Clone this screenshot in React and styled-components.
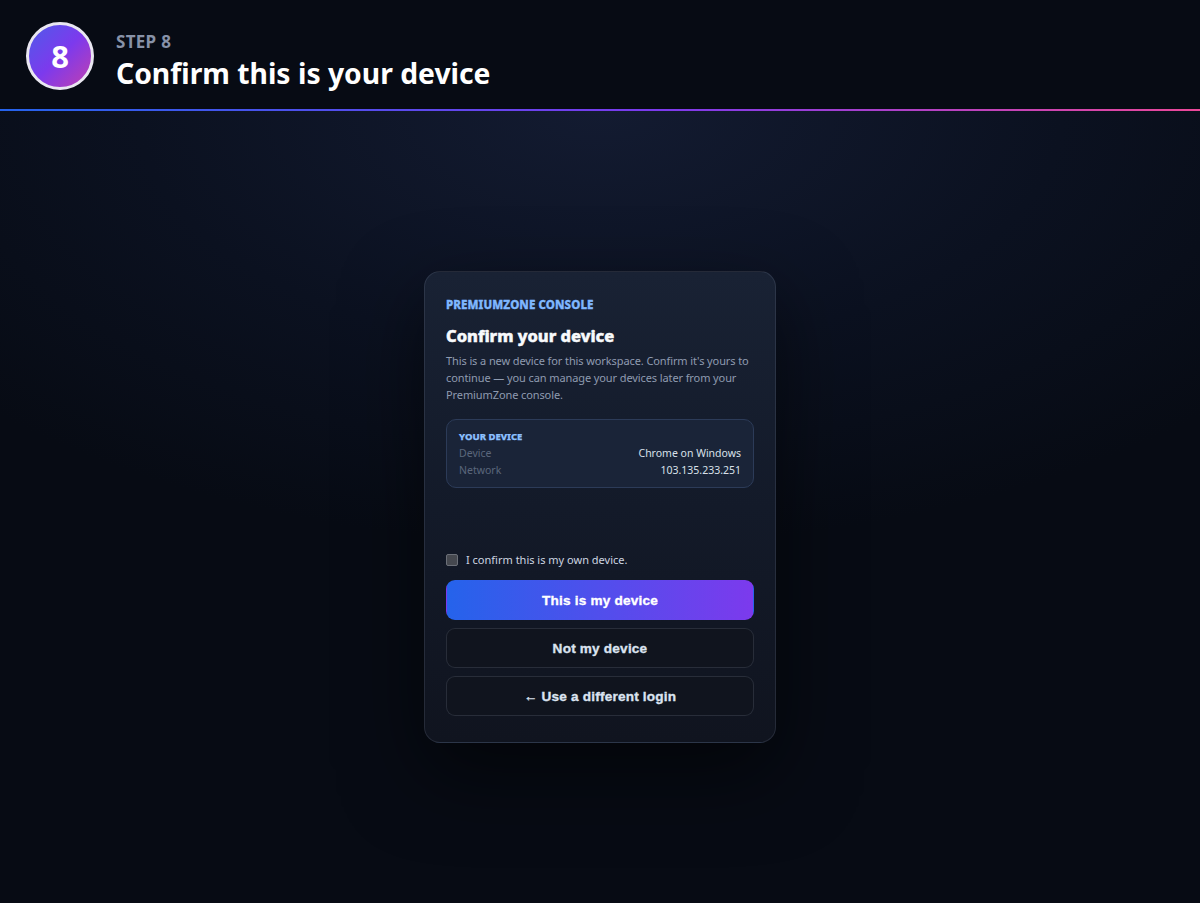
import React from 'react';
import styled, { createGlobalStyle } from 'styled-components';

const GlobalStyle = createGlobalStyle`
    html, body {
        margin: 0;
        padding: 0;
        background: #070b14;
    }
    body {
        font-family: "Noto Sans", "Open Sans", sans-serif;
    }
    * { box-sizing: border-box; }
`;

const PageStyled = styled.div`
    display: flex;
    flex-direction: column;
    min-height: 903px;
    background: #070b14;
`;

const HeaderStyled = styled.header`
    display: flex;
    align-items: center;
    gap: 22px;
    height: 111px;
    padding: 3px 26px 0;
    background: #070b14;
    border-bottom: 2px solid transparent;
    border-image: linear-gradient(90deg, #2563eb, #7c3aed 55%, #ec4899) 1;
`;

const Badge = styled.div`
    display: flex;
    align-items: center;
    justify-content: center;
    width: 68px;
    height: 68px;
    border-radius: 50%;
    border: 3px solid #e9e7f1;
    background: linear-gradient(135deg, #4f5be9 0%, #7c3aed 50%, #c13fb0 100%);
    color: #fff;
    font-size: 31px;
    font-weight: 700;
`;

const HeaderText = styled.div`
    display: flex;
    flex-direction: column;
    margin-top: 13px;

    .header{
        &__step {
            font-size: 17px;
            font-weight: 700;
            color: #8792a8;
            letter-spacing: 0.3px;
            line-height: 22px;
        }
        &__title {
            margin: 0;
            font-size: 28.3px;
            font-weight: 700;
            color: #fff;
            line-height: 41px;
        }
    }
`;

const MainStyled = styled.main`
    flex: 1;
    display: flex;
    align-items: center;
    justify-content: center;
    background: radial-gradient(ellipse 70% 55% at 50% 0%, #131b31 0%, #0b1120 55%, #070b14 100%);
`;

const CardStyled = styled.div`
    display: flex;
    flex-direction: column;
    width: 352px;
    padding: 25px 21px 26px;
    border-radius: 16px;
    border: 1px solid rgba(148, 163, 184, 0.16);
    background: linear-gradient(180deg, #192234 0%, #131a29 50%, #10141f 100%);
    box-shadow: 0 30px 80px rgba(0, 0, 0, 0.55);
`;

const Brand = styled.div`
    font-size: 11.5px;
    font-weight: 800;
    color: #7fb7ff;
    letter-spacing: 0.1px;
    line-height: 16px;
    -webkit-text-stroke: 0.35px #7fb7ff;
`;

const CardTitle = styled.h2`
    margin: 12px 0 5px;
    font-size: 16.5px;
    font-weight: 800;
    color: #f8fafc;
    line-height: 22px;
    -webkit-text-stroke: 0.5px #f8fafc;
`;

const Description = styled.p`
    margin: 0;
    font-size: 11px;
    letter-spacing: -0.1px;
    line-height: 17px;
    color: #8f9bb0;
`;

const DeviceBox = styled.div`
    display: flex;
    flex-direction: column;
    margin-top: 16px;
    padding: 10px 12px 8px;
    border-radius: 10px;
    border: 1px solid #2c3b58;
    background: #1a2438;
`;

const DeviceLabel = styled.div`
    font-size: 9.5px;
    font-weight: 800;
    color: #8cc0ff;
    line-height: 14px;
    margin-bottom: 1px;
    -webkit-text-stroke: 0.25px #8cc0ff;
`;

const DeviceRow = styled.div`
    display: flex;
    justify-content: space-between;
    font-size: 10.5px;
    line-height: 17px;

    span:first-child { color: #5b677c; }
    span:last-child { color: #d9e0ea; }
`;

const CheckRow = styled.label`
    display: flex;
    align-items: center;
    gap: 8px;
    margin-top: 64px;
    font-size: 11px;
    color: #cdd5e1;
    line-height: 16px;
`;

const CheckBox = styled.span`
    width: 12px;
    height: 12px;
    border-radius: 2px;
    border: 1px solid #6b6f78;
    background: #45484f;
`;

const ButtonStack = styled.div`
    display: flex;
    flex-direction: column;
    gap: 8px;
    margin-top: 12px;
`;

const ActionButton = styled.button`
    height: 40px;
    border-radius: 9px;
    font-family: "Liberation Sans", Arial, sans-serif;
    font-size: 13.6px;
    font-weight: 700;
    letter-spacing: 0.2px;
    cursor: pointer;
    color: ${p => (p.primary ? '#ffffff' : '#dbe3f0')};
    -webkit-text-stroke: 0.35px ${p => (p.primary ? '#ffffff' : '#dbe3f0')};
    border: 1px solid ${p => (p.primary ? 'transparent' : 'rgba(148, 163, 184, 0.18)')};
    background: ${p => (p.primary ? 'linear-gradient(90deg, #2563eb, #7c3aed)' : '#10141e')};
`;

export default function App() {
    return (
        <PageStyled>
            <GlobalStyle />
            <HeaderStyled>
                <Badge>8</Badge>
                <HeaderText>
                    <span className='header__step'>STEP 8</span>
                    <h1 className='header__title'>Confirm this is your device</h1>
                </HeaderText>
            </HeaderStyled>

            <MainStyled>
                <CardStyled>
                    <Brand>PREMIUMZONE CONSOLE</Brand>
                    <CardTitle>Confirm your device</CardTitle>
                    <Description>
                        This is a new device for this workspace. Confirm it's yours to continue — you can manage your devices later from your PremiumZone console.
                    </Description>

                    <DeviceBox>
                        <DeviceLabel>YOUR DEVICE</DeviceLabel>
                        <DeviceRow><span>Device</span><span>Chrome on Windows</span></DeviceRow>
                        <DeviceRow><span>Network</span><span>103.135.233.251</span></DeviceRow>
                    </DeviceBox>

                    <CheckRow>
                        <CheckBox />
                        I confirm this is my own device.
                    </CheckRow>

                    <ButtonStack>
                        <ActionButton primary>This is my device</ActionButton>
                        <ActionButton>Not my device</ActionButton>
                        <ActionButton>← Use a different login</ActionButton>
                    </ButtonStack>
                </CardStyled>
            </MainStyled>
        </PageStyled>
    );
}
